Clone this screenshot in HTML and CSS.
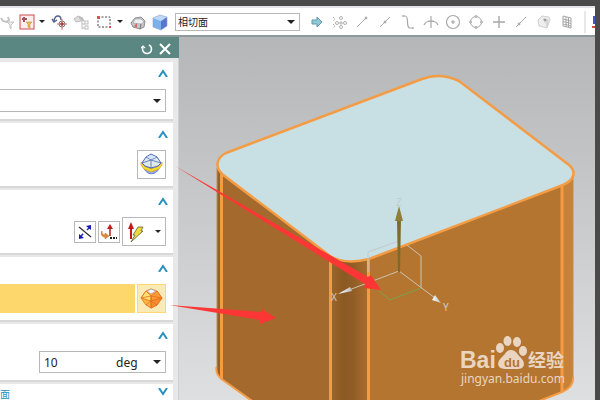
FILE: index.html
```html
<!DOCTYPE html>
<html lang="zh-CN">
<head>
  <meta charset="UTF-8" />
  <meta name="viewport" content="width=device-width, initial-scale=1" />
  <title>相切面</title>
  <link rel="stylesheet" href="styles.css">
</head>
<body>

  <header class="toolbar">
    <div class="tools">
      <button class="tool narrow" aria-label="Filter">
        <svg width="15" height="18" viewBox="0 0 15 18" fill="none" stroke="#c4c4c4"><path d="M1 5l2 3 3 1 3-2-1-3" stroke-width="2"/><path d="M7 9h7l-3 3v4l-1-1v-3z" fill="#eee"/></svg>
      </button>
      <button class="tool boxed" aria-label="Selection filter">
        <svg width="16" height="16" viewBox="0 0 16 16"><rect x="1" y="1" width="14" height="14" fill="#f9eeec" stroke="#d0494c"/><path d="M5 3v5M3 5h5" stroke="#a5525b" stroke-width="2"/><path d="M7 8h6l-2 2v4l-2-1v-3z" fill="#efbd4b" stroke="#b18a38" stroke-width=".5"/></svg>
      </button>
      <span class="caret"></span>
    </div>

    <div class="tools">
      <button class="tool" aria-label="Reset filter">
        <svg width="18" height="18" viewBox="0 0 18 18" fill="none"><path d="M3 8C4 1 10 2 10 7" stroke="#56628f" stroke-width="1.5"/><path d="M1 6l2 3 3-2" stroke="#56628f" stroke-width="1.5"/><circle cx="11" cy="11" r="3" stroke="#777"/><path d="M11 6v11M6 11h10" stroke="#d56a68"/><path d="M11 9v4M9 11h4" stroke="#833" /></svg>
      </button>
      <button class="tool" aria-label="Selection tree">
        <svg width="18" height="18" viewBox="0 0 18 18" fill="none" stroke="#bdbdbd"><path d="M1 6l4-3 5 2-2 3-5 1z" fill="#ddd"/><path d="M6 4l5 4" stroke-width="2"/><path d="M9 8v8M9 11h3M9 15h3"/><rect x="12" y="8" width="3" height="3"/><rect x="12" y="13" width="3" height="3"/></svg>
      </button>
      <button class="tool" aria-label="Rectangle select">
        <svg width="18" height="18" viewBox="0 0 18 18" fill="none"><rect x="3" y="4" width="12" height="10" stroke="#444" stroke-dasharray="2 1.5"/><path d="M2 3h3v3H2zM14 13h2v2h-2z" fill="#e05252"/></svg>
      </button>
      <span class="caret"></span>
    </div>

    <div class="tools">
      <button class="tool" aria-label="Shaded body">
        <svg width="18" height="18" viewBox="0 0 18 18" stroke-linejoin="round"><path d="M2 10L6 5l6-1 4 4-1 6-4 2-7-2z" fill="#c5c7ca" stroke="#8a8d91"/><path d="M6 6h6l3 3-3 2-8-1z" fill="#eef0f2" stroke="#9a9da1" stroke-width=".6"/><path d="M8 10l-3 3 3 2z" fill="#cf6a60"/><path d="M12 11l-1 5" stroke="#777"/></svg>
      </button>
      <button class="tool" aria-label="Solid cube">
        <svg width="18" height="18" viewBox="0 0 18 18"><path d="M2 5l7-3 7 2-6 4z" fill="#bed8f6"/><path d="M2 5l8 3v9l-8-3z" fill="#78b1ec"/><path d="M10 8l6-4v9l-6 4z" fill="#5577cf"/><path d="M2 5l7-3 7 2v9l-6 4-8-3z" fill="none" stroke="#8d9cd0" stroke-width=".6"/></svg>
      </button>
    </div>

    <label class="dropdown face-rule">
      <select aria-label="Face rule"><option>相切面</option></select>
      <span class="caret big"></span>
    </label>

    <div class="tools snaps">
      <button class="tool" aria-label="Next">
        <svg width="18" height="18" viewBox="0 0 18 18"><path d="M4 7h5V4l5 5-5 5v-3H4z" fill="#8ecbd6" stroke="#6695a8"/></svg>
      </button>
      <button class="tool" aria-label="Snap points">
        <svg width="18" height="18" viewBox="0 0 18 18" fill="none" stroke="#b2b2b2"><path d="M2 4l2 2-2 2M2 11l2 2-2 2" stroke-dasharray="2 1"/><circle cx="10" cy="5" r="1.5"/><circle cx="6" cy="10" r="1.5"/><circle cx="14" cy="10" r="1.5"/><circle cx="10" cy="14" r="1.5"/><path d="M10 8v4M8 10h4"/></svg>
      </button>
      <button class="tool" aria-label="End point">
        <svg width="18" height="18" viewBox="0 0 18 18" stroke="#aaa"><path d="M4 14l9-9"/><circle cx="13" cy="5" r="1" fill="#999"/></svg>
      </button>
      <button class="tool" aria-label="Mid point">
        <svg width="18" height="18" viewBox="0 0 18 18" stroke="#aaa"><path d="M4 14L14 4"/><circle cx="9" cy="9" r="1" fill="#999"/></svg>
      </button>
      <button class="tool" aria-label="Control point">
        <svg width="18" height="18" viewBox="0 0 18 18" stroke="#a8a8a8" stroke-width="1.2" fill="none"><path d="M4 3h2c5 0 0 12 5 12h3"/><path d="M4 2v2M14 14v2"/></svg>
      </button>
      <button class="tool" aria-label="Intersection">
        <svg width="18" height="18" viewBox="0 0 18 18" stroke="#aaa" stroke-width="1.2" fill="none"><path d="M2 12c2-5 12-5 14 0M9 3v12M6 8h6"/></svg>
      </button>
      <button class="tool" aria-label="Arc centre">
        <svg width="18" height="18" viewBox="0 0 18 18" stroke="#a8a8a8" stroke-width="1.2" fill="none"><circle cx="9" cy="9" r="6.5"/><path d="M9 7v4M7 9h4"/></svg>
      </button>
      <button class="tool" aria-label="Quadrant point">
        <svg width="18" height="18" viewBox="0 0 18 18" stroke="#aaa" fill="none"><circle cx="9" cy="9" r="5.5"/><g fill="#ddd"><circle cx="9" cy="3.5" r="1"/><circle cx="9" cy="14.5" r="1"/><circle cx="3.5" cy="9" r="1"/><circle cx="14.5" cy="9" r="1"/></g></svg>
      </button>
      <button class="tool" aria-label="Existing point">
        <svg width="18" height="18" viewBox="0 0 18 18" stroke="#a8a8a8" stroke-width="1.4"><path d="M9 3v12M3 9h12"/></svg>
      </button>
      <button class="tool" aria-label="Point on curve">
        <svg width="18" height="18" viewBox="0 0 18 18" stroke="#aaa"><path d="M4 14L14 4"/><circle cx="7" cy="11" r="1" fill="#999"/></svg>
      </button>
      <button class="tool" aria-label="Point on face">
        <svg width="18" height="18" viewBox="0 0 18 18" stroke="#d0d0d0"><path d="M3 7l4-4 7 1 1 3-3 8-8-2z" fill="#eee"/><path d="M8 6l5 1-1 7" fill="#dcdcdc"/><circle cx="10" cy="7" r="1" fill="#999" stroke="#999"/></svg>
      </button>
      <button class="tool" aria-label="Grid point">
        <svg width="18" height="18" viewBox="0 0 18 18" stroke="#a6a6a6" fill="none"><path d="M5 3l8 2v10l-8-2zM8 4v10M10.5 4v10M5 6l8 2M5 8.500l8 2M5 11l8 2"/></svg>
      </button>
    </div>
    <span class="separator"></span>
    <svg class="cut-icon" width="3" height="14" viewBox="0 0 3 14"><path d="M1 1h2v8H1z" fill="#4055c8"/><path d="M0 11h3v2H0z" fill="#df4a3c"/></svg>
  </header>

  <main class="workspace">
    <aside class="dialog">
      <div class="title-bar">
        <button class="title-btn" aria-label="Reset">
          <svg width="12" height="12" viewBox="0 0 12 12" fill="none" stroke="#fff" stroke-width="1.6"><path d="M2 4a4.500 4.500 0 1 0 6-2"/><path d="M0 5l2-2 2 2" stroke-width="1.2"/></svg>
        </button>
        <button class="title-btn" aria-label="Close">
          <svg width="12" height="12" viewBox="0 0 12 12" stroke="#fff" stroke-width="2"><path d="M1 1l10 10M11 1L1 11"/></svg>
        </button>
      </div>

      <div class="sections">
        <section class="section">
          <button class="fold" aria-label="Collapse"><svg width="10" height="8" viewBox="0 0 10 8"><path d="M1 8l4-6 4 6"/></svg></button>
          <label class="dropdown wide">
            <select aria-label="Type"><option></option></select>
            <span class="caret big"></span>
          </label>
        </section>

        <section class="section">
          <button class="fold" aria-label="Collapse"><svg width="10" height="8" viewBox="0 0 10 8"><path d="M1 8l4-6 4 6"/></svg></button>
          <div class="row">
            <button class="pick" aria-label="Select parting">
              <svg width="23" height="23" viewBox="0 0 23 23" stroke-linejoin="round"><path d="M4 14c1 9 14 9 15 0z" fill="#90a7e8" stroke="#7182d2"/><path d="M1 9l3 4 7 3 8-3 3-4v3l-3 4-8 3-7-3-3-4z" fill="#f6dd28" stroke="#d8a51f" stroke-width=".7"/><path d="M2 10l4-6 5-3 6 3 4 6-3 3-7 2-6-2z" fill="#dcebe9" stroke="#5268b8"/><path d="M6 4l5 3 6-3M11 7v8M2 10l9-3 10 3" fill="none" stroke="#5268b8" stroke-width=".8"/><path d="M7 4l4-2 5 2-5 2z" fill="#d1e6ff"/></svg>
            </button>
          </div>
        </section>

        <section class="section">
          <button class="fold" aria-label="Collapse"><svg width="10" height="8" viewBox="0 0 10 8"><path d="M1 8l4-6 4 6"/></svg></button>
          <div class="row">
            <button class="pick small" aria-label="Reverse direction">
              <svg width="16" height="16" viewBox="0 0 16 16"><path d="M2 3l12 10" stroke="#333" stroke-width="1.3"/><path d="M4 12l8-8" stroke="#2b2bc0" stroke-width="1.5" stroke-dasharray="3 5.500"/><path d="M14 1v5l-5-4zM2 15v-5l5 4z" fill="#1717b8"/></svg>
            </button>
            <button class="pick small" aria-label="Vector dialog">
              <svg width="16" height="16" viewBox="0 0 16 16"><path d="M9 4v8" stroke="#b51b1b" stroke-width="1.5"/><path d="M9 0l3 5H6z" fill="#c21c1c"/><path d="M1 7c0 3 1 4 3 4V9l4 3-4 3v-2c-3 0-5-3-3-6z" fill="#ee8434" stroke="#c2601d" stroke-width=".5"/><path d="M9 13h2v2H9zM12 13h2v2h-2zM15 13h1v2h-1z" fill="#222"/></svg>
            </button>
            <button class="pick vector" aria-label="Inferred vector">
              <svg width="18" height="22" viewBox="0 0 18 22"><path d="M4 6v12" stroke="#b51b1b" stroke-width="2"/><path d="M4 1l3 7H1z" fill="#c21c1c"/><path d="M11 6h5l-2 4h2L4 21l4-7H6z" fill="#ecdb3e" stroke="#655f38" stroke-width=".8"/></svg>
              <span class="caret"></span>
            </button>
          </div>
        </section>

        <section class="section">
          <button class="fold" aria-label="Collapse"><svg width="10" height="8" viewBox="0 0 10 8"><path d="M1 8l4-6 4 6"/></svg></button>
          <div class="row active-row">
            <div class="highlight"></div>
            <button class="pick active" aria-label="Select face">
              <svg width="23" height="23" viewBox="0 0 23 23" stroke="#e46f20" stroke-width=".8" stroke-linejoin="round"><path d="M1 11l5-7 5-2 6 2 5 7-5 7-6 3-5-3z" fill="#fdb544"/><path d="M11 9l6-5 5 7-11 3z" fill="#ff9b32"/><path d="M1 11l5-7 5 5v5z" fill="#ffe070"/><path d="M11 14l11-3-5 7-6 3z" fill="#f88c30"/><path d="M11 9v12M6 18l5-4 6 4M1 11l10-2 11 2" fill="none"/><path d="M7 4l4-2 5 2-5 3z" fill="#f3f5ff" stroke="#b8a1a5"/></svg>
            </button>
          </div>
        </section>

        <section class="section">
          <button class="fold" aria-label="Collapse"><svg width="10" height="8" viewBox="0 0 10 8"><path d="M1 8l4-6 4 6"/></svg></button>
          <div class="angle">
            <input type="text" value="10" aria-label="Angle">
            <select aria-label="Unit"><option>deg</option></select>
            <span class="caret big"></span>
          </div>
        </section>

        <section class="section last">
          <h2>面</h2>
          <button class="fold" aria-label="Expand"><svg width="10" height="8" viewBox="0 0 10 8"><path d="M1 0l4 6 4-6"/></svg></button>
        </section>
      </div>
    </aside>

    <div class="viewport">
      <svg viewBox="179 37 416 363" preserveAspectRatio="xMinYMin slice">
        <defs>
          <linearGradient id="fillet">
            <stop offset="0" stop-color="#9c652a"/>
            <stop offset=".35" stop-color="#8b5923"/>
            <stop offset=".6" stop-color="#925e26"/>
            <stop offset="1" stop-color="#aa6e2e"/>
          </linearGradient>
          <linearGradient id="cone"><stop offset="0" stop-color="#fff"/><stop offset="1" stop-color="#bbb"/></linearGradient>
        </defs>

        <!-- side faces -->
        <path d="M217 165h5v214q-5-4-5-9z" fill="#955f29"/>
        <path d="M222 170l109 85v200l-109-76z" fill="#a46a2d"/>
        <path d="M331 250h38v160h-38z" fill="url(#fillet)"/>
        <path d="M369 258l193-73v207l-24 9H369z" fill="#b37530"/>
        <path d="M562 185q11-5 11-12v205q0 9-11 14z" fill="#c68238"/>
        <g fill="none" stroke="#f49c44" stroke-width="3">
          <path d="M221.500 174v205M330.500 256v150M368.500 259v150M562 186v206"/>
          <path d="M216.500 367q-1 7 5 12l32 23M573 377q1 10-11 15l-28 11" stroke-width="2"/>
        </g>
        <path d="M217 168v200M573 175v203" stroke="#c28a4a"/>

        <!-- top face -->
        <path d="M226 153L422 79Q440 72 459 81L569 165C577 172 574 180 563 185L369 259Q345 265 330 256L222 174C215 167 216 158 226 153Z" fill="#c8dfe4" stroke="#f49c44" stroke-width="2.500"/>

        <!-- coordinate axes -->
        <g fill="none" stroke="#cfc2b2">
          <path d="M368 272v-20l31-11" stroke="#c3c9ca"/>
          <path d="M407 245l14 11v32"/>
          <path d="M399 271l-50 19M399 271l36 27"/>
          <path d="M379 291l11 9 31-12" stroke="#7da24a"/>
        </g>
        <path d="M338 294l12-7 2 4z" fill="url(#cone)"/>
        <path d="M441 303l-9-3 3-5z" fill="url(#cone)"/>
        <path d="M397 219h4l-1 53h-2z" fill="#7b6c2d"/>
        <path d="M399 206l4 15h-8z" fill="#907d38"/>
        <g class="axis-name">
          <text x="331" y="301">X</text>
          <text x="443" y="311">Y</text>
          <text x="396" y="206" class="faint">Z</text>
        </g>

        <!-- watermark -->
        <g class="watermark">
          <text x="460" y="368" class="brand">Bai</text>
          <ellipse cx="500" cy="348" rx="4" ry="5"/>
          <ellipse cx="507.500" cy="341" rx="4" ry="5"/>
          <ellipse cx="517" cy="342" rx="4" ry="5"/>
          <ellipse cx="523" cy="351" rx="4" ry="5"/>
          <path d="M511 350c5 0 6 4 9 7 6 5 5 12-2 12h-13c-8 0-9-7-3-12 4-3 4-7 9-7z"/>
          <text x="504" y="367" class="du">du</text>
          <text x="528" y="367" class="cn">经验</text>
          <text x="461" y="383" class="site">jingyan.baidu.com</text>
        </g>
      </svg>
    </div>

    <!-- pointers from the dialog to the faces -->
    <svg class="pointers" viewBox="0 37 595 363" preserveAspectRatio="xMinYMin slice" fill="#fc3635">
      <path d="M175 166l193 111 3-2 10 15-17-2 1-4z"/>
      <path d="M169 305l92 7 1-3 14 9-16 6v-4z"/>
    </svg>
  </main>

</body>
</html>
```
FILE: styles.css
```css
:root {
  --frame: #4a4a4a;
  --teal: #5b8783;
  --panel: #e8e8e8;
  --line: #b8b8b8;
  --blue: #2c8fbd;
  --mark: #e9d5c1;
}

* {
  box-sizing: border-box;
}

body {
  margin: 0;
  padding: 6px 5px 0 0;
  height: 100vh;
  display: flex;
  flex-direction: column;
  overflow: hidden;
  background: var(--frame);
  color: #222;
  font-family: "Noto Sans", "Noto Sans CJK SC", sans-serif;
  font-size: 12px;
}

button,
input,
select {
  margin: 0;
  padding: 0;
  border: 0;
  background: none;
  color: inherit;
  font: inherit;
}

select {
  appearance: none;
  flex: 1;
  min-width: 0;
}

svg {
  display: block;
}

/* toolbar */
.toolbar {
  flex: none;
  display: flex;
  align-items: center;
  gap: 6px;
  height: 31px;
  background: #fff;
  border-top: 2px solid #e4e4e8;
  border-bottom: 2px solid #8d999b;
  overflow: hidden;
}

.tools {
  display: flex;
  align-items: center;
  gap: 4px;
}

.snaps {
  flex: 1;
  justify-content: space-between;
  gap: 0;
  padding: 0 2px;
}

.caret {
  flex: none;
  border: 3px solid transparent;
  border-top-color: #222;
  border-bottom: 0;
}

.caret.big {
  border-width: 4px;
  border-bottom: 0;
}

.dropdown {
  display: flex;
  align-items: center;
  padding: 0 4px 0 2px;
  border: 1px solid var(--line);
  background: #fff;
}

.face-rule {
  width: 125px;
  height: 18px;
  font-size: 10px;
}

.separator {
  width: 2px;
  height: 22px;
  background: #e8e8e8;
}

/* dialog */
.workspace {
  flex: 1;
  min-height: 0;
  position: relative;
  display: grid;
  grid-template-columns: 179px 1fr;
  grid-template-rows: 100%;
}

.dialog {
  background: var(--panel);
  overflow: hidden;
}

.title-bar {
  display: flex;
  align-items: center;
  justify-content: flex-end;
  gap: 6px;
  height: 21px;
  padding: 2px 8px 0 0;
  background: var(--teal);
}

.sections {
  display: flex;
  flex-direction: column;
  gap: 4px;
  padding: 4px 5px 0 0;
  border-right: 1px solid #d0d0d0;
}

.section {
  display: flex;
  flex-direction: column;
  gap: 12px;
  padding: 7px 7px 7px 0;
  background: #fff;
  box-shadow: 0 2px 0 #d8d8d8;
}

.fold {
  align-self: flex-end;
  height: 8px;
  margin-right: -2px;
}

.fold path {
  fill: none;
  stroke: var(--blue);
  stroke-width: 2;
}

.wide {
  height: 23px;
  border-left: 0;
}

.row {
  display: flex;
  align-items: center;
  justify-content: flex-end;
  gap: 2px;
}

.pick {
  display: flex;
  align-items: center;
  justify-content: center;
  width: 29px;
  height: 29px;
  border: 1px solid var(--line);
  background: #fff;
}

.pick.small {
  width: 22px;
  height: 22px;
}

.pick.vector {
  gap: 10px;
  width: 44px;
}

.pick.active {
  border-color: #fbd874;
  background: #faeab5;
}

.highlight {
  flex: 1;
  height: 29px;
  background: #fdd66c;
}

.angle {
  display: flex;
  align-items: center;
  align-self: flex-end;
  width: 127px;
  height: 22px;
  padding: 0 4px;
  border: 1px solid var(--line);
}

.angle input {
  width: 72px;
}

.last {
  flex-direction: row;
  justify-content: space-between;
  padding-top: 4px;
}

.last h2 {
  margin: 0;
  color: var(--blue);
  font-size: 10px;
  font-weight: 400;
  line-height: 12px;
}

.last .fold {
  align-self: flex-start;
}

/* model view */
.viewport {
  background: linear-gradient(#b5b6b8, #dedfe1);
  overflow: hidden;
}

.viewport svg,
.pointers {
  width: 100%;
  height: 100%;
}

.pointers {
  position: absolute;
  inset: 0;
  pointer-events: none;
}

.axis-name {
  fill: #d6cabb;
  font-size: 10px;
}

.axis-name .faint {
  fill: #c0ccd0;
}

.watermark {
  fill: var(--mark);
}

.brand {
  font: bold 23px "Liberation Sans", sans-serif;
}

.du {
  fill: #b37530;
  font: bold 13px "Liberation Sans", sans-serif;
}

.cn {
  font: bold 18px "Noto Sans CJK SC", sans-serif;
}

.site {
  font: 12px "Noto Sans", sans-serif;
}
```
